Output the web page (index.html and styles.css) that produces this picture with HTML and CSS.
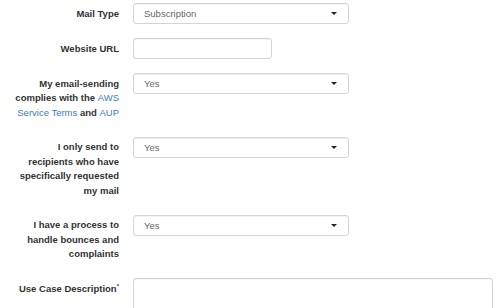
FILE: index.html
```html
<!DOCTYPE html>
<html lang="en">
<head>
    <meta charset="UTF-8">
    <meta name="viewport" content="width=device-width, initial-scale=1.0">
    <title>Sending Limit Request</title>
    <link rel="stylesheet" href="styles.css">
</head>
<body>
    <form class="form-horizontal">
        <div class="form-group">
            <label class="control-label">Mail Type</label>
            <div class="select-box">
                <span>Subscription</span>
                <span class="caret"></span>
            </div>
        </div>
        <div class="form-group">
            <label class="control-label">Website URL</label>
            <div class="text-box"></div>
        </div>
        <div class="form-group">
            <label class="control-label">My email-sending complies with the <a href="#">AWS</a><br><a href="#">Service Terms</a> and <a href="#">AUP</a></label>
            <div class="select-box">
                <span>Yes</span>
                <span class="caret"></span>
            </div>
        </div>
        <div class="form-group">
            <label class="control-label">I only send to recipients who have specifically requested my mail</label>
            <div class="select-box">
                <span>Yes</span>
                <span class="caret"></span>
            </div>
        </div>
        <div class="form-group">
            <label class="control-label">I have a process to handle bounces and complaints</label>
            <div class="select-box">
                <span>Yes</span>
                <span class="caret"></span>
            </div>
        </div>
        <div class="form-group">
            <label class="control-label">Use Case Description<sup>*</sup></label>
            <div class="text-area"></div>
        </div>
    </form>
</body>
</html>
```

FILE: styles.css
```css
body {
    margin: 0;
    font-family: "Liberation Sans", Arial, sans-serif;
    color: #333;
    background: #fff;
    overflow: hidden;
}
.form-horizontal {
    padding: 3px 0 0 15px;
}
.form-group {
    display: flex;
    align-items: flex-start;
    margin-bottom: 14px;
}
.control-label {
    width: 104px;
    flex-shrink: 0;
    text-align: right;
    font-weight: bold;
    font-size: 9.5px;
    line-height: 14.5px;
    padding: 3.5px 0 2.5px;
}
.control-label a {
    color: #3b7bc4;
    font-weight: normal;
    text-decoration: none;
}
.control-label sup {
    font-size: 6px;
    line-height: 0;
    vertical-align: 4px;
}
.select-box,
.text-box,
.text-area {
    margin-left: 14px;
    box-sizing: border-box;
    border: 1px solid #d4d4d4;
    border-radius: 3px;
    box-shadow: inset 0 1px 1px rgba(0, 0, 0, 0.05);
    background: #fff;
}
.select-box {
    width: 216px;
    height: 21px;
    display: flex;
    align-items: center;
    justify-content: space-between;
    padding: 0 10px;
    font-size: 9.5px;
    color: #666;
}
.caret {
    width: 0;
    height: 0;
    border-left: 3px solid transparent;
    border-right: 3px solid transparent;
    border-top: 3px solid #222;
    margin-right: 1px;
}
.text-box {
    width: 139px;
    height: 21px;
}
.text-area {
    width: 360px;
    height: 60px;
}
```
